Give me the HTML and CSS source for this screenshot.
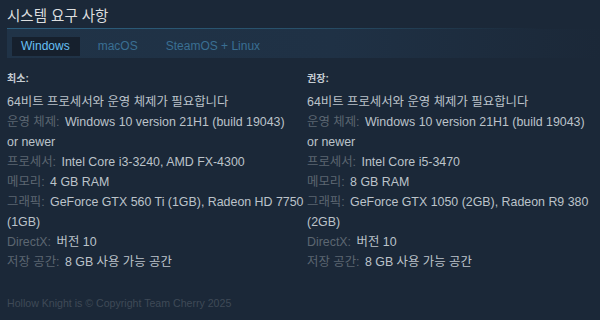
FILE: index.html
```html
<!DOCTYPE html>
<html lang="ko">
<head>
<meta charset="utf-8">
<title>시스템 요구 사항</title>
<link rel="stylesheet" href="styles.css">
</head>
<body>
<div class="page">
  <h2 class="title">시스템 요구 사항</h2>
  <div class="tabs">
    <span class="tab active">Windows</span>
    <span class="tab">macOS</span>
    <span class="tab">SteamOS + Linux</span>
  </div>
  <div class="reqs">
    <div class="col">
      <div class="col-head">최소:</div>
      <ul class="list">
        <li>64비트 프로세서와 운영 체제가 필요합니다</li>
        <li><span class="label">운영 체제:</span> Windows 10 version 21H1 (build 19043) or&nbsp;newer</li>
        <li><span class="label">프로세서:</span> Intel Core i3-3240, AMD FX-4300</li>
        <li><span class="label">메모리:</span> 4 GB RAM</li>
        <li><span class="label">그래픽:</span> GeForce GTX 560 Ti (1GB), Radeon HD 7750 (1GB)</li>
        <li><span class="label">DirectX:</span> 버전 10</li>
        <li><span class="label">저장 공간:</span> 8 GB 사용 가능 공간</li>
      </ul>
    </div>
    <div class="col">
      <div class="col-head">권장:</div>
      <ul class="list">
        <li>64비트 프로세서와 운영 체제가 필요합니다</li>
        <li><span class="label">운영 체제:</span> Windows 10 version 21H1 (build 19043) or&nbsp;newer</li>
        <li><span class="label">프로세서:</span> Intel Core i5-3470</li>
        <li><span class="label">메모리:</span> 8 GB RAM</li>
        <li><span class="label">그래픽:</span> GeForce GTX 1050 (2GB), Radeon R9 380 (2GB)</li>
        <li><span class="label">DirectX:</span> 버전 10</li>
        <li><span class="label">저장 공간:</span> 8 GB 사용 가능 공간</li>
      </ul>
    </div>
  </div>
  <p class="footer">Hollow Knight is © Copyright Team Cherry 2025</p>
</div>
</body>
</html>
```

FILE: styles.css
```css
html, body {
  margin: 0;
  padding: 0;
  background: #1b2838;
}

body {
  font-family: "Liberation Sans", Arial, "Noto Sans CJK KR", sans-serif;
  color: #bcc3ca;
  width: 600px;
  height: 320px;
  overflow: hidden;
}

.page {
  padding: 6px 0 0 7px;
}

.title {
  margin: 0;
  font-size: 14.5px;
  line-height: 20px;
  font-weight: normal;
  color: #dcdedf;
  height: 22px;
}

.tabs {
  display: flex;
  gap: 9px;
  padding: 8px 0 0 5px;
  box-sizing: border-box;
  height: 30px;
  border-top: 1px solid transparent;
  border-image: linear-gradient(90deg, #2d5f7e 0%, #28506a 50%, #1b2838 90%) 1;
  background: linear-gradient(90deg, #203347 0%, #1f3145 55%, #1b2838 100%);
}

.tab {
  height: 19px;
  padding: 0 10px 0 9px;
  font-size: 12px;
  line-height: 19px;
  color: #3a6f93;
}

.tab.active {
  background: #16202d;
  color: #67c1f5;
}

.reqs {
  display: grid;
  grid-template-columns: 300px 1fr;
  margin-top: 14px;
}

.col-head {
  font-size: 10px;
  line-height: 14px;
  font-weight: bold;
  color: #c6cdd3;
  margin-bottom: 6px;
}

.list {
  list-style: none;
  margin: 0;
  padding: 0;
  font-size: 12.4px;
  line-height: 20px;
}

.label {
  color: #5c6671;
  margin-right: 2px;
}

.footer {
  margin: 24px 0 0;
  font-size: 10.6px;
  line-height: 14px;
  color: #3f4a57;
}
```
